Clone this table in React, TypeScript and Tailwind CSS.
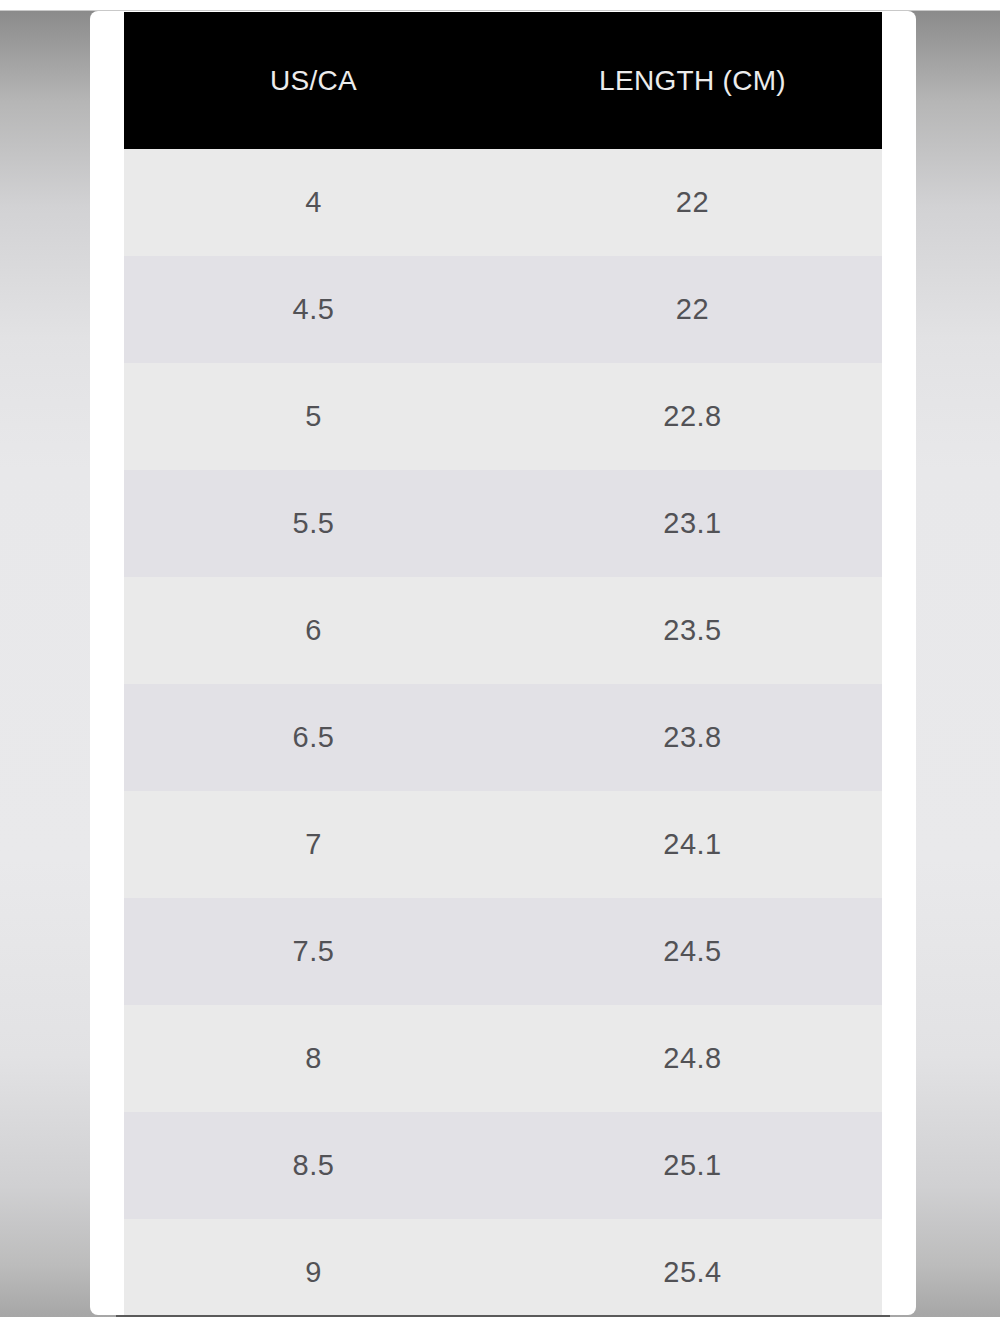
const rows: [string, string][] = [
  ["4", "22"],
  ["4.5", "22"],
  ["5", "22.8"],
  ["5.5", "23.1"],
  ["6", "23.5"],
  ["6.5", "23.8"],
  ["7", "24.1"],
  ["7.5", "24.5"],
  ["8", "24.8"],
  ["8.5", "25.1"],
  ["9", "25.4"],
];

export default function App() {
  return (
    <div className="h-[1333px] w-[1000px] overflow-hidden bg-white font-['Liberation_Sans',Arial,sans-serif]">
      <div className="h-[11px] border-b border-[#c9c9c9] bg-white" />
      <div className="flex h-[1306px] flex-col bg-[linear-gradient(to_bottom,#8b8b8b_0%,#b6b6b6_7%,#d2d2d4_15%,#e2e2e4_25%,#e8e8ea_35%,#e9e9eb_65%,#e2e2e4_80%,#d0d0d2_90%,#bcbcbc_96%,#a6a6a6_100%)] pl-[90px] pr-[84px]">
        <div className="h-[1304px] overflow-hidden rounded-[8px] bg-white px-[34px] pt-[1px]">
          <div className="grid h-[137px] grid-cols-2 items-center bg-black text-[28px] tracking-[0.3px] text-[#ececec]">
            <div className="text-center">US/CA</div>
            <div className="text-center">LENGTH (CM)</div>
          </div>
          {rows.map(([us, cm], i) => (
            <div
              key={us}
              className={`grid h-[107px] shrink-0 grid-cols-2 items-center text-[29px] tracking-[0.5px] text-[#525256] ${
                i % 2 === 0 ? "bg-[#eaeaea]" : "bg-[#e2e1e6]"
              }`}
            >
              <div className="text-center">{us}</div>
              <div className="text-center">{cm}</div>
            </div>
          ))}
        </div>
        <div className="ml-[26px] h-[2px] w-[774px] bg-[#5a5a5a]" />
      </div>
    </div>
  );
}
